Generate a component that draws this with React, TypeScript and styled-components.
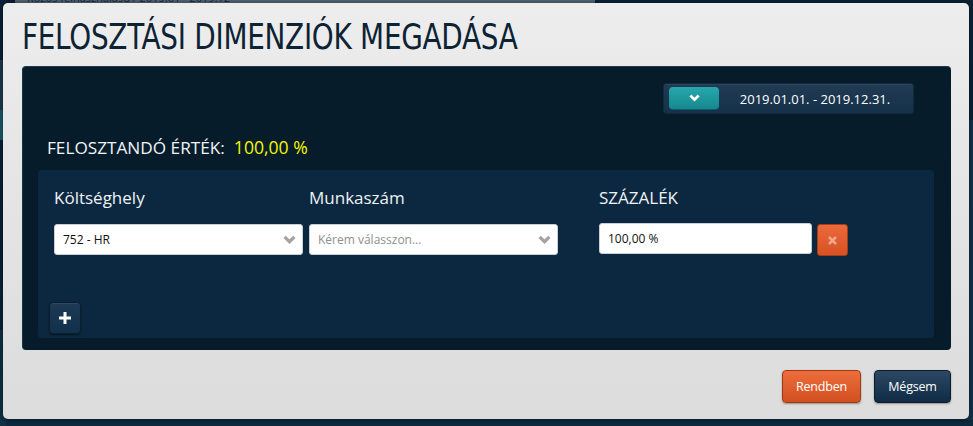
import React from "react";
import styled, { createGlobalStyle } from "styled-components";

const Global = createGlobalStyle`
  html, body { margin: 0; padding: 0; background: #0b2236; }
  body { font-family: "Open Sans", "Liberation Sans", sans-serif; }
  * { box-sizing: border-box; }
`;

const Page = styled.div`
  position: relative;
  width: 973px;
  height: 426px;
  overflow: hidden;
  background: linear-gradient(180deg, #0c2338 0%, #0a2033 60%, #0d2a3e 100%);
`;

const BehindTab = styled.div`
  position: absolute;
  left: 15px;
  top: -9px;
  width: 580px;
  height: 14px;
  background: #56697a;
  border-radius: 3px;
  color: #1a2c3c;
  font-size: 11px;
  line-height: 12px;
  padding-left: 12px;
  padding-top: 1px;
`;

const SideStrip = styled.div<{ $top: number; $h: number; $c: string; $left?: boolean }>`
  position: absolute;
  ${(p) => (p.$left ? "left: 0;" : "right: 0;")}
  top: ${(p) => p.$top}px;
  width: 6px;
  height: ${(p) => p.$h}px;
  background: ${(p) => p.$c};
`;

const Modal = styled.div`
  position: absolute;
  left: 3px;
  top: 3px;
  width: 966px;
  height: 416px;
  border-radius: 5px;
  background: linear-gradient(180deg, #ededed 0%, #e4e4e4 50%, #dcdcdc 100%);
  box-shadow: 0 0 6px rgba(0, 0, 0, 0.5);
  display: flex;
  flex-direction: column;
  padding: 0 18px 0 19px;
`;

const Title = styled.h1`
  margin: 0;
  height: 63px;
  display: flex;
  align-items: center;
  padding-top: 4px;
  font-family: "DejaVu Sans Condensed", "DejaVu Sans", sans-serif;
  font-stretch: condensed;
  font-weight: normal;
  font-size: 36px;
  letter-spacing: -0.3px;
  color: #0d2233;
  white-space: nowrap;
  transform: scaleX(0.86);
  transform-origin: left center;
`;

const DarkPanel = styled.div`
  height: 284px;
  background: #061c2b;
  border-radius: 4px;
  border-top: 1px solid #1f3a50;
  border-left: 1px solid #1a3348;
  padding: 16px 17px 12px 15px;
  display: flex;
  flex-direction: column;
`;

const TopRow = styled.div`
  display: flex;
  justify-content: flex-end;
  padding-right: 20px;
`;

const DateBar = styled.div`
  width: 251px;
  height: 31px;
  background: linear-gradient(180deg, #213b53 0%, #15304a 100%);
  border: 1px solid #0f2a3f;
  border-radius: 3px;
  display: flex;
  align-items: center;
  padding-left: 5px;
  box-shadow: inset 0 1px 0 rgba(255, 255, 255, 0.06);
`;

const TealButton = styled.div`
  width: 50px;
  height: 23px;
  border-radius: 4px;
  background: linear-gradient(180deg, #27a7ad 0%, #16888f 100%);
  border-bottom: 1px solid #0b5f66;
  display: flex;
  align-items: center;
  justify-content: center;
`;

const DateText = styled.div`
  flex: 1;
  text-align: center;
  color: #ffffff;
  font-size: 13px;
  padding-right: 2px;
`;

const SumRow = styled.div`
  margin-top: 21px;
  padding-left: 9px;
  display: flex;
  align-items: baseline;
  gap: 9px;
  font-size: 17.2px;
  color: #f2f4f6;
  height: 26px;
`;

const SumValue = styled.span`
  color: #f5f500;
  font-size: 17.6px;
`;

const InnerPanel = styled.div`
  margin-top: 9px;
  height: 168px;
  background: #0c2840;
  border-radius: 4px;
  padding: 15px 12px 4px 11px;
  display: flex;
  flex-direction: column;
`;

const Grid = styled.div`
  display: grid;
  grid-template-columns: 249px 249px 212px 31px;
  column-gap: 6px;
  padding-left: 5px;
`;

const Label = styled.div<{ $offset?: number }>`
  font-size: 17px;
  color: #eef2f5;
  height: 26px;
  line-height: 26px;
  margin-left: ${(p) => p.$offset ?? 0}px;
`;

const FieldRow = styled.div`
  display: contents;
`;

const SelectBox = styled.div<{ $placeholder?: boolean }>`
  margin-top: 13px;
  height: 31px;
  background: #ffffff;
  border-radius: 3px;
  border: 1px solid #c9cfd4;
  display: flex;
  align-items: center;
  justify-content: space-between;
  padding: 0 6px 0 8px;
  font-size: 12px;
  color: ${(p) => (p.$placeholder ? "#8f8f8f" : "#111")};
`;

const InputBox = styled.div`
  margin-top: 12px;
  margin-left: 35px;
  width: 213px;
  height: 31px;
  background: #ffffff;
  border-radius: 3px;
  border: 1px solid #c9cfd4;
  display: flex;
  align-items: center;
  padding-left: 8px;
  font-size: 12px;
  color: #111;
`;

const DeleteButton = styled.div`
  margin-top: 13px;
  margin-left: 35px;
  width: 31px;
  height: 32px;
  border-radius: 3px;
  background: linear-gradient(180deg, #ec693c 0%, #d65224 100%);
  border: 1px solid #a83d15;
  display: flex;
  align-items: center;
  justify-content: center;
`;

const Spacer = styled.div`
  flex: 1;
`;

const PlusButton = styled.div`
  width: 32px;
  height: 32px;
  border-radius: 4px;
  background: linear-gradient(180deg, #1e3a55 0%, #11304b 100%);
  border: 1px solid #0a1e30;
  box-shadow: 0 1px 2px rgba(0, 0, 0, 0.5), inset 0 1px 0 rgba(255, 255, 255, 0.08);
  display: flex;
  align-items: center;
  justify-content: center;
`;

const Footer = styled.div`
  display: flex;
  justify-content: flex-end;
  gap: 13px;
  margin-top: 20px;
`;

const Btn = styled.div<{ $variant: "primary" | "secondary" }>`
  height: 33px;
  width: ${(p) => (p.$variant === "primary" ? "79px" : "77px")};
  border-radius: 4px;
  display: flex;
  align-items: center;
  justify-content: center;
  font-size: 12.5px;
  letter-spacing: -0.2px;
  color: #fff;
  background: ${(p) =>
    p.$variant === "primary"
      ? "linear-gradient(180deg, #ee6d3d 0%, #d2501f 100%)"
      : "linear-gradient(180deg, #2c4862 0%, #0f2b45 100%)"};
  border: 1px solid ${(p) => (p.$variant === "primary" ? "#9e3a12" : "#0a1c2c")};
  box-shadow: 0 1px 2px rgba(0, 0, 0, 0.35);
`;

const Chevron = ({ color, size = 12, sw = 3 }: { color: string; size?: number; sw?: number }) => (
  <svg width={size} height={size * 0.7} viewBox="0 0 12 8">
    <polyline points="1.5,1.5 6,6 10.5,1.5" fill="none" stroke={color} strokeWidth={sw} strokeLinecap="butt" />
  </svg>
);

export default function App() {
  return (
    <Page>
      <Global />
      <BehindTab>Közös felhasználású / 2019.01 - 2019.12</BehindTab>
      <SideStrip $left $top={60} $h={50} $c="#1c3a50" />
      <SideStrip $left $top={110} $h={30} $c="#1b5a6a" />
      <SideStrip $left $top={330} $h={96} $c="#0f3145" />
      <SideStrip $top={120} $h={300} $c="#14324a" />
      <Modal>
        <Title>FELOSZTÁSI DIMENZIÓK MEGADÁSA</Title>
        <DarkPanel>
          <TopRow>
            <DateBar>
              <TealButton>
                <Chevron color="#ffffff" size={11} sw={3} />
              </TealButton>
              <DateText>2019.01.01. - 2019.12.31.</DateText>
            </DateBar>
          </TopRow>
          <SumRow>
            <span>FELOSZTANDÓ ÉRTÉK:</span>
            <SumValue>100,00 %</SumValue>
          </SumRow>
          <InnerPanel>
            <Grid>
              <Label>Költséghely</Label>
              <Label>Munkaszám</Label>
              <Label $offset={35}>SZÁZALÉK</Label>
              <div />
              <FieldRow>
                <SelectBox>
                  <span>752 - HR</span>
                  <Chevron color="#a3a3a3" size={13} sw={3} />
                </SelectBox>
                <SelectBox $placeholder>
                  <span>Kérem válasszon...</span>
                  <Chevron color="#a3a3a3" size={13} sw={3} />
                </SelectBox>
                <InputBox>100,00 %</InputBox>
                <DeleteButton>
                  <svg width="9" height="9" viewBox="0 0 9 9">
                    <path d="M1 1 L8 8 M8 1 L1 8" stroke="#f3a585" strokeWidth="2.6" />
                  </svg>
                </DeleteButton>
              </FieldRow>
            </Grid>
            <Spacer />
            <PlusButton>
              <svg width="12" height="12" viewBox="0 0 12 12">
                <path d="M6 0 V12 M0 6 H12" stroke="#ffffff" strokeWidth="3" />
              </svg>
            </PlusButton>
          </InnerPanel>
        </DarkPanel>
        <Footer>
          <Btn $variant="primary">Rendben</Btn>
          <Btn $variant="secondary">Mégsem</Btn>
        </Footer>
      </Modal>
    </Page>
  );
}
